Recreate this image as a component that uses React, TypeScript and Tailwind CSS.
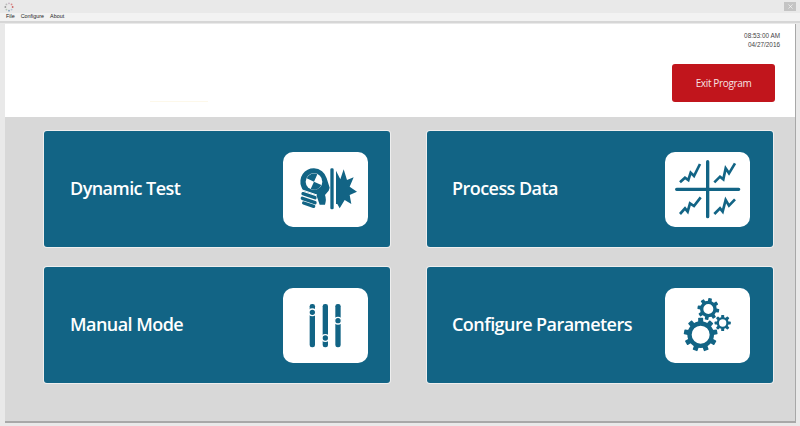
import { X } from 'lucide-react';

const TEAL = '#126485';

function Spinner() {
    const colors = ['#c9b7c4', '#d98a8a', '#cc6666', '#b5c7d8', '#7f9fc0', '#b8c8b8', '#999999', '#bbbbbb'];
    return (
        <svg width="10" height="10" viewBox="0 0 11 11">
            {colors.map((c, i) => {
                const a = (i / colors.length) * Math.PI * 2;
                return <circle key={i} cx={5.5 + Math.sin(a) * 4} cy={5.5 - Math.cos(a) * 4} r="1" fill={c} />;
            })}
        </svg>
    );
}

// icon viewBoxes are in 3x picture units, one tile = 255x225
function BulbIcon() {
    return (
        <svg width="85" height="75" viewBox="40 36 255 225" fill={TEAL}>
            <path d="M133 85A40 40 0 0 0 95 140L100 152L140 165L150 194L166 194Q171 178 166 165L177 152L180 143L171 115A40 40 0 0 0 133 85Z" />
            <circle cx="133" cy="125" r="25" fill="#fff" />
            <path d="M133 125L111 115A24 24 0 0 1 143 103ZM133 125L155 135A24 24 0 0 1 123 147Z" />
            <g stroke="#fff" strokeWidth="3" fill="none">
                <path d="M92 148L142 165" />
            </g>
            <g stroke={TEAL} strokeWidth="10" strokeLinecap="round" fill="none">
                <path d="M100 161L136 173" />
                <path d="M98 175L136 188" />
                <path d="M102 189L132 199" />
            </g>
            <rect x="182" y="85" width="10" height="123" rx="4" />
            <path d="M199 92L212 118L222 88L232 120L252 112L240 140L262 155L240 165L245 192L225 180L210 205L203 192L199 192Z" />
        </svg>
    );
}

function ChartsIcon() {
    return (
        <svg width="85" height="75" viewBox="30 36 255 225" fill="none" stroke={TEAL}>
            <path d="M158 65V230M65 148H251" strokeWidth="10" strokeLinecap="round" />
            <g strokeWidth="8">
                <path d="M75 127L90 113L100 120L107 98L117 108L135 72" />
                <path d="M178 127L195 110L205 118L212 85L222 100L240 70" />
                <path d="M75 222L90 205L98 215L105 190L117 198L137 172" />
                <path d="M178 222L195 205L203 215L212 180L222 197L240 178" />
            </g>
        </svg>
    );
}

function SlidersIcon() {
    return (
        <svg width="85" height="75" viewBox="40 22 255 225" fill={TEAL}>
            <rect x="120" y="70" width="16" height="130" rx="7" />
            <rect x="159" y="70" width="16" height="130" rx="7" />
            <rect x="197" y="70" width="16" height="130" rx="7" />
            <circle cx="128" cy="95" r="10" stroke="#fff" strokeWidth="4" />
            <circle cx="167" cy="172" r="10" stroke="#fff" strokeWidth="4" />
            <circle cx="205" cy="120" r="10" stroke="#fff" strokeWidth="4" />
        </svg>
    );
}

function Gear({ cx, cy, body, hole, teeth, tooth, start = 0 }: { cx: number; cy: number; body: number; hole: number; teeth: number; tooth: number; start?: number }) {
    const angles = Array.from({ length: teeth }, (_, i) => start + (360 / teeth) * i);
    return (
        <g>
            <circle cx={cx} cy={cy} r={body + 4} fill="#fff" />
            {angles.map((deg) => (
                <rect
                    key={deg}
                    x={cx - tooth / 2}
                    y={cy - body - tooth * 0.7}
                    width={tooth}
                    height={tooth}
                    rx="2"
                    fill={TEAL}
                    transform={`rotate(${deg} ${cx} ${cy})`}
                />
            ))}
            <circle cx={cx} cy={cy} r={(body + hole) / 2} fill="none" stroke={TEAL} strokeWidth={body - hole} />
        </g>
    );
}

function GearsIcon() {
    return (
        <svg width="85" height="75" viewBox="30 22 255 225">
            <Gear cx={160} cy={85} body={25} hole={15} teeth={8} tooth={11} start={10} />
            <Gear cx={203} cy={127} body={18} hole={11} teeth={8} tooth={9} />
            <Gear cx={137} cy={162} body={40} hole={27} teeth={9} tooth={15} />
        </svg>
    );
}

function Card({ title, pad, children }: { title: string; pad: string; children: React.ReactNode }) {
    return (
        <div className={`flex items-center justify-between rounded-[3px] bg-[#126485] shadow-[0_0_0_1px_#eeeeee] ${pad}`}>
            <span className="-mt-[2px] font-['Open_Sans',sans-serif] text-[18px] font-semibold tracking-[-0.55px] text-white">{title}</span>
            <div className="flex h-[75px] w-[85px] items-center justify-center rounded-[10px] bg-white">{children}</div>
        </div>
    );
}

export default function App() {
    return (
        <div className="flex h-[426px] w-[800px] flex-col overflow-hidden bg-[#e9e9e9] font-['Liberation_Sans',sans-serif]">
            <div className="flex h-[13px] shrink-0 items-center justify-between pl-[4px] pr-[4px]">
                <Spinner />
                <div className="flex h-[9px] w-[12px] items-center justify-center bg-[#c4c4c4]">
                    <X size={7} color="#fff" strokeWidth={2} />
                </div>
            </div>
            <div className="flex h-[10px] shrink-0 items-center gap-[6px] border-b-2 border-[#d6d6d6] bg-[#f2f2f2] pl-[6px] text-[5.4px] leading-none text-[#222]">
                <span>File</span>
                <span>Configure</span>
                <span>About</span>
            </div>
            <div className="ml-[5px] mr-[4px] mt-px flex min-h-0 flex-1 flex-col border-r border-[#a8a8a8]">
                <div className="relative flex h-[93px] shrink-0 flex-col items-end bg-white pr-[15px] pt-[7px]">
                    <div className="text-right text-[6.4px] leading-[9px] text-[#444]">
                        <div>08:53:00 AM</div>
                        <div>04/27/2016</div>
                    </div>
                    <div className="mr-[5px] mt-[15px] flex h-[38px] w-[103px] items-center justify-center rounded-[3px] bg-[#c1151c] font-['Open_Sans',sans-serif] text-[10px] tracking-[-0.35px] text-[#f6e3e3]">
                        Exit Program
                    </div>
                    <div className="absolute left-[145px] top-[77px] h-px w-[58px] bg-[#fdf8ea]" />
                </div>
                <div className="grid flex-1 grid-cols-[346px_346px] grid-rows-[116px_116px] gap-x-[37px] gap-y-[20px] bg-[#d8d8d8] pl-[39px] pt-[14px]">
                    <Card title="Dynamic Test" pad="pl-[26px] pr-[22px]">
                        <BulbIcon />
                    </Card>
                    <Card title="Process Data" pad="pl-[25px] pr-[23px]">
                        <ChartsIcon />
                    </Card>
                    <Card title="Manual Mode" pad="pl-[26px] pr-[22px]">
                        <SlidersIcon />
                    </Card>
                    <Card title="Configure Parameters" pad="pl-[25px] pr-[23px]">
                        <GearsIcon />
                    </Card>
                </div>
                <div className="h-[2px] shrink-0 bg-[#a8a8a8]" />
            </div>
            <div className="h-[3px] shrink-0" />
        </div>
    );
}
